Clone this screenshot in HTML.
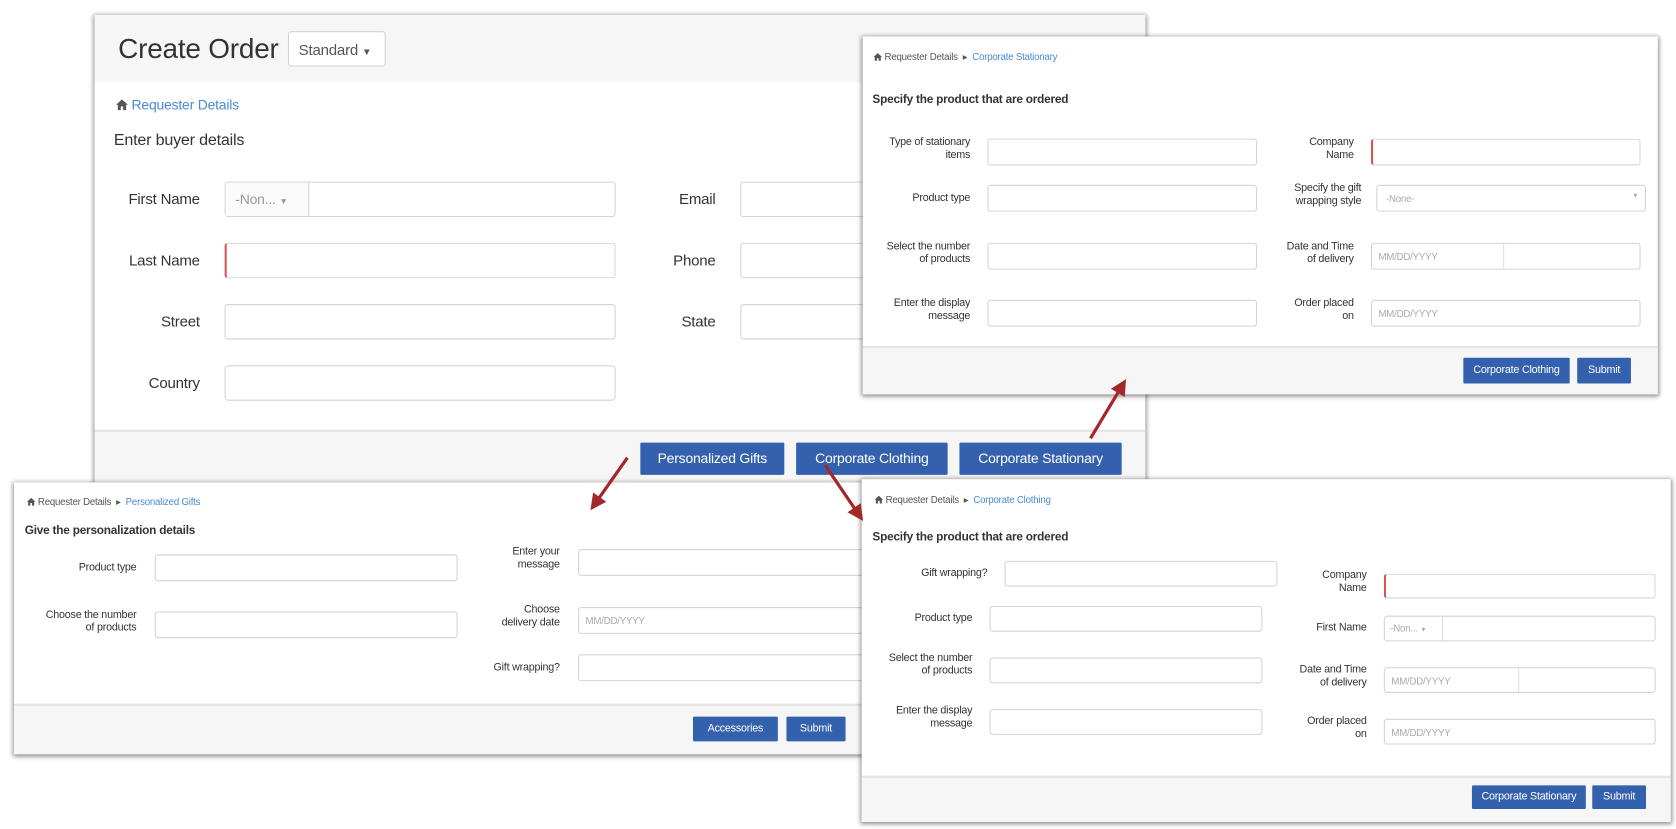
<!DOCTYPE html>
<html><head><meta charset="utf-8"><style>
*{box-sizing:border-box;margin:0;padding:0}
html,body{width:1676px;height:829px;overflow:hidden;background:#fff;font-family:"Liberation Sans",sans-serif;color:#333}
#s{position:absolute;left:0;top:0;width:1560px;height:772px;transform:scale(1.0744);transform-origin:0 0;letter-spacing:-0.2px}
.p{position:absolute;background:#fff;box-shadow:0 1px 4px 1px rgba(0,0,0,.45);overflow:hidden}
.a{position:absolute}
.in{position:absolute;border:1px solid #d4d4d4;border-radius:3px;background:#fff}
.req{border-left:2px solid #d9534f}
.lb{position:absolute;text-align:right;line-height:1.2}
.ft{position:absolute;left:0;right:0;bottom:0;background:#f6f6f6;border-top:2px solid #e4e4e4}
.btn{position:absolute;background:#3461ad;color:#fff;text-align:center;border-radius:1px}
.ph{position:absolute;color:#aaa;font-size:9px}
.bc{position:absolute;font-size:9px;color:#555}
.bc b{font-weight:normal;color:#4a8ad0}
.h{position:absolute;font-weight:bold;font-size:11px;color:#333}
.hs{display:inline-block;vertical-align:-1px}
</style></head><body><div id="s">

<!-- main panel -->
<div class="p" style="left:88px;top:14px;width:978px;height:440px">
 <div class="a" style="left:0;top:0;right:0;height:62px;background:#f6f6f6"></div>
 <div class="a" style="left:22px;top:16px;font-size:26px;color:#333">Create Order</div>
 <div class="in" style="left:180px;top:15px;width:91px;height:33px;font-size:14px;color:#555;padding:8px 9px">Standard <span style="font-size:9px">▼</span></div>
 <div class="a" style="left:20px;top:76px;font-size:13px;color:#4a8ad0"><svg class="hs" width="11" height="11" viewBox="0 0 10 10"><path d="M5 0.5 L0 5 H1.5 V9.5 H4 V6.5 H6 V9.5 H8.5 V5 H10 Z" fill="#555"/></svg> Requester Details</div>
 <div class="a" style="left:18px;top:108px;font-size:15px;color:#333">Enter buyer details</div>
 <div class="lb" style="left:0;width:98px;top:163px;font-size:14px">First Name</div>
 <div class="in" style="left:121px;top:155px;width:364px;height:33px"><div class="a" style="left:0;top:0;width:78px;height:31px;border-right:1px solid #d4d4d4;background:#fafafa;color:#999;font-size:13px;padding:8px 9px">-Non... <span style="font-size:8px">▼</span></div></div>
 <div class="lb" style="left:0;width:98px;top:220px;font-size:14px">Last Name</div>
 <div class="in req" style="left:121px;top:212px;width:364px;height:33px"></div>
 <div class="lb" style="left:0;width:98px;top:277px;font-size:14px">Street</div>
 <div class="in" style="left:121px;top:269px;width:364px;height:33px"></div>
 <div class="lb" style="left:0;width:98px;top:334px;font-size:14px">Country</div>
 <div class="in" style="left:121px;top:326px;width:364px;height:33px"></div>
 <div class="lb" style="left:480px;width:98px;top:163px;font-size:14px">Email</div>
 <div class="in" style="left:601px;top:155px;width:364px;height:33px"></div>
 <div class="lb" style="left:480px;width:98px;top:220px;font-size:14px">Phone</div>
 <div class="in" style="left:601px;top:212px;width:364px;height:33px"></div>
 <div class="lb" style="left:480px;width:98px;top:277px;font-size:14px">State</div>
 <div class="in" style="left:601px;top:269px;width:364px;height:33px"></div>
 <div class="ft" style="top:386px"></div>
 <div class="btn" style="left:508px;top:398px;width:134px;height:30px;font-size:13px;line-height:30px">Personalized Gifts</div>
 <div class="btn" style="left:653px;top:398px;width:141px;height:30px;font-size:13px;line-height:30px">Corporate Clothing</div>
 <div class="btn" style="left:805px;top:398px;width:151px;height:30px;font-size:13px;line-height:30px">Corporate Stationary</div>
</div>

<!-- top right panel -->
<div class="p" style="left:803px;top:34px;width:740px;height:333px">
 <div class="bc" style="left:10px;top:14px"><svg class="hs" width="8" height="8" viewBox="0 0 10 10"><path d="M5 0.5 L0 5 H1.5 V9.5 H4 V6.5 H6 V9.5 H8.5 V5 H10 Z" fill="#555"/></svg> Requester Details &nbsp;▸&nbsp; <b>Corporate Stationary</b></div>
 <div class="h" style="left:9px;top:53px;font-size:11px">Specify the product that are ordered</div>
 <div class="lb" style="left:0;width:100px;top:93px;font-size:10px">Type of stationary<br>items</div>
 <div class="in" style="left:116px;top:95px;width:251px;height:25px"></div>
 <div class="lb" style="left:0;width:100px;top:145px;font-size:10px">Product type</div>
 <div class="in" style="left:116px;top:138px;width:251px;height:25px"></div>
 <div class="lb" style="left:0;width:100px;top:190px;font-size:10px">Select the number<br>of products</div>
 <div class="in" style="left:116px;top:192px;width:251px;height:25px"></div>
 <div class="lb" style="left:0;width:100px;top:243px;font-size:10px">Enter the display<br>message</div>
 <div class="in" style="left:116px;top:245px;width:251px;height:25px"></div>
 <div class="lb" style="left:357px;width:100px;top:93px;font-size:10px">Company<br>Name</div>
 <div class="in req" style="left:473px;top:95px;width:251px;height:25px"></div>
 <div class="lb" style="left:357px;width:107px;top:136px;font-size:10px">Specify the gift<br>wrapping style</div>
 <div class="in" style="left:478px;top:138px;width:251px;height:25px"><span class="ph" style="left:8px;top:7px">-None-</span><span class="ph" style="right:6px;top:7px;font-size:6px">▼</span></div>
 <div class="lb" style="left:357px;width:100px;top:190px;font-size:10px">Date and Time<br>of delivery</div>
 <div class="in" style="left:473px;top:192px;width:251px;height:25px"><span class="ph" style="left:6px;top:7px">MM/DD/YYYY</span><div class="a" style="left:122px;top:0;height:23px;border-left:1px solid #e0e0e0"></div></div>
 <div class="lb" style="left:357px;width:100px;top:243px;font-size:10px">Order placed<br>on</div>
 <div class="in" style="left:473px;top:245px;width:251px;height:25px"><span class="ph" style="left:6px;top:7px">MM/DD/YYYY</span></div>
 <div class="ft" style="top:288px"></div>
 <div class="btn" style="left:559px;top:299px;width:99px;height:24px;font-size:10px;line-height:24px">Corporate Clothing</div>
 <div class="btn" style="left:665px;top:299px;width:50px;height:24px;font-size:10px;line-height:24px">Submit</div>
</div>

<!-- bottom left panel -->
<div class="p" style="left:13px;top:449px;width:800px;height:253px">
 <div class="bc" style="left:12px;top:13px"><svg class="hs" width="8" height="8" viewBox="0 0 10 10"><path d="M5 0.5 L0 5 H1.5 V9.5 H4 V6.5 H6 V9.5 H8.5 V5 H10 Z" fill="#555"/></svg> Requester Details &nbsp;▸&nbsp; <b>Personalized Gifts</b></div>
 <div class="h" style="left:10px;top:39px">Give the personalization details</div>
 <div class="lb" style="left:0;width:114px;top:74px;font-size:10px">Product type</div>
 <div class="in" style="left:131px;top:67px;width:282px;height:25px"></div>
 <div class="lb" style="left:0;width:114px;top:118px;font-size:10px">Choose the number<br>of products</div>
 <div class="in" style="left:131px;top:120px;width:282px;height:25px"></div>
 <div class="lb" style="left:400px;width:108px;top:59px;font-size:10px">Enter your<br>message</div>
 <div class="in" style="left:525px;top:62px;width:290px;height:25px"></div>
 <div class="lb" style="left:400px;width:108px;top:113px;font-size:10px">Choose<br>delivery date</div>
 <div class="in" style="left:525px;top:116px;width:290px;height:25px"><span class="ph" style="left:6px;top:7px">MM/DD/YYYY</span></div>
 <div class="lb" style="left:400px;width:108px;top:167px;font-size:10px">Gift wrapping?</div>
 <div class="in" style="left:525px;top:160px;width:290px;height:25px"></div>
 <div class="ft" style="top:206px"></div>
 <div class="btn" style="left:632px;top:218px;width:79px;height:23px;font-size:10px;line-height:23px">Accessories</div>
 <div class="btn" style="left:719px;top:218px;width:55px;height:23px;font-size:10px;line-height:23px">Submit</div>
</div>

<!-- bottom right panel -->
<div class="p" style="left:802px;top:446px;width:753px;height:319px">
 <div class="bc" style="left:12px;top:14px"><svg class="hs" width="8" height="8" viewBox="0 0 10 10"><path d="M5 0.5 L0 5 H1.5 V9.5 H4 V6.5 H6 V9.5 H8.5 V5 H10 Z" fill="#555"/></svg> Requester Details &nbsp;▸&nbsp; <b>Corporate Clothing</b></div>
 <div class="h" style="left:10px;top:48px">Specify the product that are ordered</div>
 <div class="lb" style="left:0;width:117px;top:82px;font-size:10px">Gift wrapping?</div>
 <div class="in" style="left:133px;top:76px;width:254px;height:24px"></div>
 <div class="lb" style="left:0;width:103px;top:124px;font-size:10px">Product type</div>
 <div class="in" style="left:119px;top:118px;width:254px;height:24px"></div>
 <div class="lb" style="left:0;width:103px;top:161px;font-size:10px">Select the number<br>of products</div>
 <div class="in" style="left:119px;top:166px;width:254px;height:24px"></div>
 <div class="lb" style="left:0;width:103px;top:210px;font-size:10px">Enter the display<br>message</div>
 <div class="in" style="left:119px;top:214px;width:254px;height:24px"></div>
 <div class="lb" style="left:370px;width:100px;top:84px;font-size:10px">Company<br>Name</div>
 <div class="in req" style="left:486px;top:88px;width:253px;height:23px"></div>
 <div class="lb" style="left:370px;width:100px;top:133px;font-size:10px">First Name</div>
 <div class="in" style="left:486px;top:127px;width:253px;height:24px"><div class="a" style="left:0;top:0;width:54px;height:22px;border-right:1px solid #ddd;color:#aaa;font-size:9px;padding:6px 5px">-Non... <span style="font-size:6px">▼</span></div></div>
 <div class="lb" style="left:370px;width:100px;top:172px;font-size:10px">Date and Time<br>of delivery</div>
 <div class="in" style="left:486px;top:175px;width:253px;height:24px"><span class="ph" style="left:6px;top:7px">MM/DD/YYYY</span><div class="a" style="left:124px;top:0;height:22px;border-left:1px solid #e0e0e0"></div></div>
 <div class="lb" style="left:370px;width:100px;top:220px;font-size:10px">Order placed<br>on</div>
 <div class="in" style="left:486px;top:223px;width:253px;height:24px"><span class="ph" style="left:6px;top:7px">MM/DD/YYYY</span></div>
 <div class="ft" style="top:276px"></div>
 <div class="btn" style="left:568px;top:285px;width:106px;height:22px;font-size:10px;line-height:22px">Corporate Stationary</div>
 <div class="btn" style="left:680px;top:285px;width:50px;height:22px;font-size:10px;line-height:22px">Submit</div>
</div>

<!-- arrows -->
<svg class="a" style="left:0;top:0" width="1560" height="772">
 <defs><marker id="m" markerWidth="5" markerHeight="5" refX="3" refY="2.5" orient="auto"><path d="M0,0 L5,2.5 L0,5 z" fill="#a3282a"/></marker></defs>
 <g stroke="#a3282a" stroke-width="3" fill="none" marker-end="url(#m)">
  <line x1="1015" y1="408" x2="1045" y2="358"/>
  <line x1="584" y1="426" x2="553" y2="470"/>
  <line x1="768" y1="433" x2="800" y2="480"/>
 </g>
</svg>
</div></body></html>
